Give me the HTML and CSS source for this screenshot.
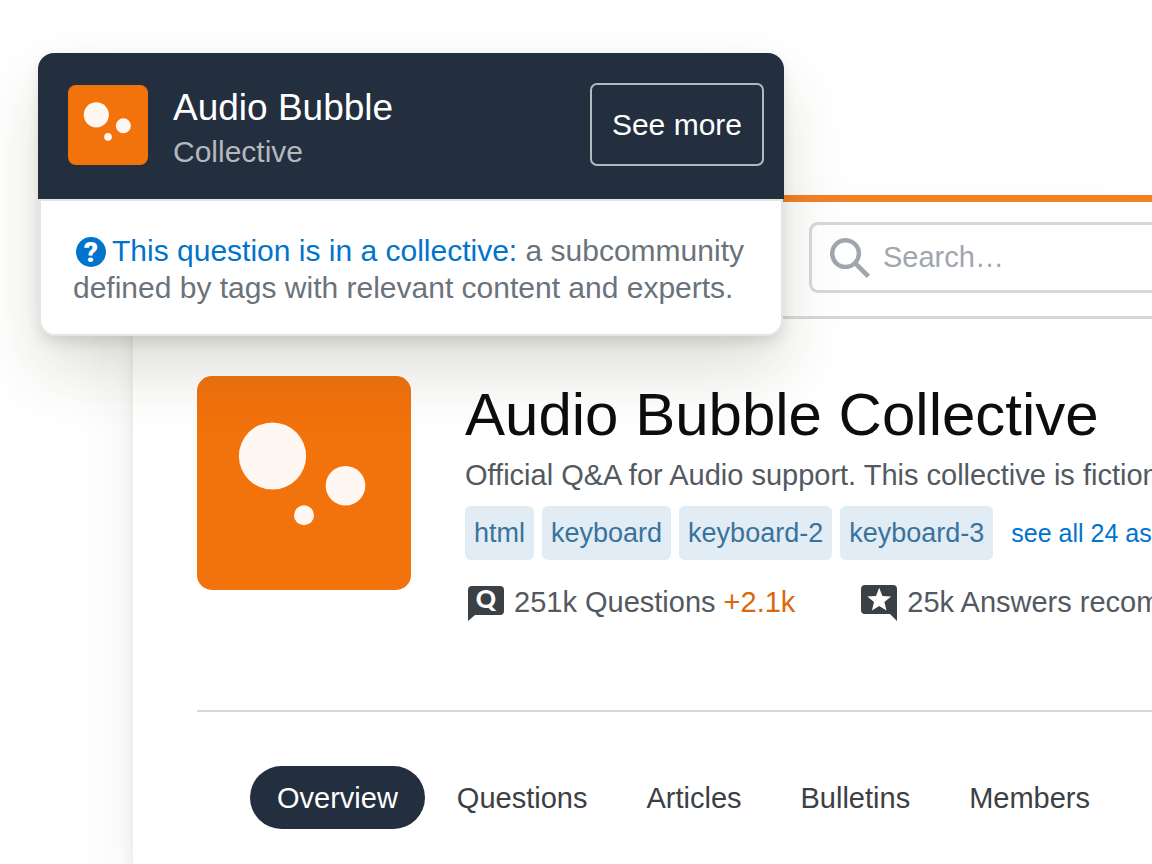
FILE: index.html
```html
<!DOCTYPE html>
<html lang="en">
<head>
<meta charset="utf-8">
<meta name="viewport" content="width=device-width, initial-scale=1">
<title>Audio Bubble Collective</title>
<link rel="stylesheet" href="styles.css">
</head>
<body>
<div class="stage">
  <div class="page">
    <header class="topbar">
      <form class="search" role="search">
        <svg class="search-icon" viewBox="0 0 18 18" aria-hidden="true"><path d="m18 16.500-5.140-5.180h-.35a7 7 0 1 0-1.190 1.190v.35L16.500 18l1.500-1.500zM12 7A5 5 0 1 1 2 7a5 5 0 0 1 10 0z"/></svg>
        <input class="search-input" type="search" placeholder="Search…" aria-label="Search">
      </form>
    </header>
    <main class="content">
      <section class="hero">
        <svg class="hero-logo" viewBox="0 0 214 214" role="img" aria-label="Audio Bubble logo">
          <rect width="214" height="214" rx="15" fill="#f2720c"/>
          <g fill="#fff7f2"><circle cx="75.500" cy="80" r="33.600"/><circle cx="148.500" cy="109.700" r="19.800"/><circle cx="107" cy="139.300" r="10"/></g>
        </svg>
        <div class="hero-text">
          <h1 class="title">Audio Bubble Collective</h1>
          <p class="description">Official Q&amp;A for Audio support. This collective is fictional</p>
          <div class="tags">
            <a class="tag" href="#">html</a>
            <a class="tag" href="#">keyboard</a>
            <a class="tag" href="#">keyboard-2</a>
            <a class="tag" href="#">keyboard-3</a>
            <a class="see-all" href="#">see all 24 associated tags</a>
          </div>
          <div class="stats">
            <div class="stat">
              <svg class="stat-icon" viewBox="0 0 36 36" aria-hidden="true"><path fill="#3b4045" d="M4 1h28a4 4 0 0 1 4 4v21a4 4 0 0 1-4 4H7l-7 6V5a4 4 0 0 1 4-4z"/><text class="q-mark" x="18" y="23" text-anchor="middle">Q</text></svg>
              <span>251k Questions <span class="gain">+2.1k</span></span>
            </div>
            <div class="stat">
              <svg class="stat-icon" viewBox="0 0 36 36" aria-hidden="true"><path fill="#3b4045" d="M4 0h28a4 4 0 0 1 4 4v32l-7-7H4a4 4 0 0 1-4-4V4a4 4 0 0 1 4-4z"/><path fill="#fff" d="m18.200 2.800 3.200 8.200 8.700.5-6.700 5.600 2.100 8.500-7.300-4.700-7.300 4.700 2.100-8.500-6.700-5.600 8.700-.5z"/></svg>
              <span>25k Answers recommended</span>
            </div>
          </div>
        </div>
      </section>
      <nav class="tabs" aria-label="Collective">
        <a class="tab tab-active" href="#" aria-current="page">Overview</a>
        <a class="tab" href="#">Questions</a>
        <a class="tab" href="#">Articles</a>
        <a class="tab" href="#">Bulletins</a>
        <a class="tab" href="#">Members</a>
      </nav>
    </main>
  </div>

  <aside class="popup">
    <div class="popup-head">
      <svg class="popup-logo" viewBox="0 0 80 80" role="img" aria-label="Audio Bubble logo">
        <rect width="80" height="80" rx="8" fill="#f2720c"/>
        <g fill="#fff7f2"><circle cx="28.300" cy="29.800" r="12.600"/><circle cx="55.400" cy="40.800" r="7.500"/><circle cx="40" cy="51.900" r="3.800"/></g>
      </svg>
      <div class="popup-names">
        <h2 class="popup-title">Audio Bubble</h2>
        <p class="popup-sub">Collective</p>
      </div>
      <button class="see-more" type="button">See more</button>
    </div>
    <p class="popup-body"><svg class="help-icon" viewBox="0 0 30 30" aria-hidden="true"><circle cx="15" cy="15" r="15" fill="#0074cc"/><text class="help-mark" x="15" y="25" text-anchor="middle">?</text></svg><a class="popup-link" href="#">This question is in a collective:</a> a subcommunity defined by tags with relevant content and experts.</p>
  </aside>
</div>
</body>
</html>
```
FILE: styles.css
```css
* {
  box-sizing: border-box;
}

body {
  margin: 0;
  background: #fff;
  color: #525960;
  font-family: "Liberation Sans", Arial, sans-serif;
  font-size: 29px;
  line-height: 36px;
}

h1, h2, p {
  margin: 0;
  font-weight: 400;
}

a {
  color: #0074cc;
  text-decoration: none;
}

.stage {
  position: relative;
  min-height: 100vh;
  padding: 195px 0 0 133px;
  overflow: hidden;
  display: flex;
}

.page {
  flex: 1;
  min-width: 0;
  background: #fff;
  border-top: 7px solid #f48024;
  box-shadow: 0 36px 60px rgba(60, 60, 40, 0.08), 0 12px 12px rgba(60, 60, 40, 0.1);
}

.topbar {
  padding: 20px 0 23px 676px;
  border-bottom: 3px solid #d6d9dc;
}

.search {
  display: flex;
  align-items: center;
  gap: 13px;
  height: 71px;
  padding-left: 18px;
  border: 3px solid #d6d9dc;
  border-right: 0;
  border-radius: 9px 0 0 9px;
}

.search-icon {
  flex: none;
  width: 40px;
  height: 40px;
  fill: #9fa6ad;
}

.search-input {
  flex: 1;
  min-width: 0;
  padding: 0 0 2px;
  border: 0;
  outline: 0;
  background: none;
  font: inherit;
}

.search-input::placeholder {
  color: #9fa6ad;
  opacity: 1;
}

.content {
  padding: 57px 0 34px 64px;
}

.hero {
  display: flex;
  gap: 54px;
  padding-bottom: 89px;
  border-bottom: 2px solid #d6d9dc;
  white-space: nowrap;
}

.hero-logo {
  flex: none;
  width: 214px;
  height: 214px;
}

.hero-text {
  flex: 1;
  min-width: 0;
  padding-top: 5px;
}

.title {
  color: #0c0d0e;
  font-size: 60px;
  line-height: 68px;
}

.description {
  margin-top: 8px;
}

.tags {
  display: flex;
  align-items: center;
  gap: 8px;
  margin-top: 13px;
}

.tag {
  padding: 1px 9px 0;
  border-radius: 6px;
  background: #e1ecf4;
  color: #39739d;
  font-size: 27px;
  line-height: 53px;
}

.see-all {
  margin-left: 10px;
  font-size: 25px;
}

.stats {
  display: flex;
  gap: 63px;
  margin-top: 24px;
}

.stat {
  display: flex;
  align-items: flex-start;
  gap: 10px;
  padding-left: 3px;
}

.stat-icon {
  flex: none;
  width: 36px;
  height: 36px;
  margin-top: 1px;
}

.q-mark {
  fill: #fff;
  font: 900 25px Lato, sans-serif;
}

.gain {
  color: #da680b;
}

.tabs {
  display: flex;
  gap: 5px;
  padding: 54px 0 0 53px;
}

.tab {
  padding: 1px 27px 0;
  border-radius: 32px;
  color: #3b4045;
  line-height: 62px;
}

.tab-active {
  background: #232f3f;
  color: #fff;
}

.popup {
  position: absolute;
  top: 53px;
  left: 38px;
  width: 746px;
  font-size: 30px;
}

.popup::before {
  content: "";
  position: absolute;
  inset: 0 2px;
  border-radius: 16px;
  box-shadow: 0 34px 64px rgba(60, 60, 30, 0.17), 0 6px 14px rgba(60, 60, 30, 0.14);
}

.popup-head {
  position: relative;
  display: flex;
  align-items: center;
  gap: 25px;
  min-height: 146px;
  padding: 0 20px 3px 30px;
  border-radius: 16px 16px 0 0;
  background: #232f3f;
}

.popup-logo {
  flex: none;
  width: 80px;
  height: 80px;
}

.popup-names {
  flex: 1;
  padding-top: 7px;
}

.popup-title {
  color: #fff;
  font-size: 37px;
  line-height: 44px;
}

.popup-sub {
  margin-top: 3px;
  color: #b4b8bd;
  line-height: 38px;
}

.see-more {
  padding: 0 20px;
  border: 2px solid #b4b8bf;
  border-radius: 7px;
  background: none;
  color: #fff;
  font: inherit;
  line-height: 79px;
}

.popup-body {
  position: relative;
  margin: 0 1px;
  padding: 31px 24px 28px 32px;
  border: 2px solid #e3e6e8;
  border-radius: 0 0 16px 16px;
  background: #fff;
  color: #6a737c;
  line-height: 37px;
}

.help-icon {
  width: 30px;
  height: 30px;
  margin: 0 6px 0 3px;
  vertical-align: -6px;
}

.help-mark {
  fill: #fff;
  font: 900 28px Roboto, sans-serif;
}
```
